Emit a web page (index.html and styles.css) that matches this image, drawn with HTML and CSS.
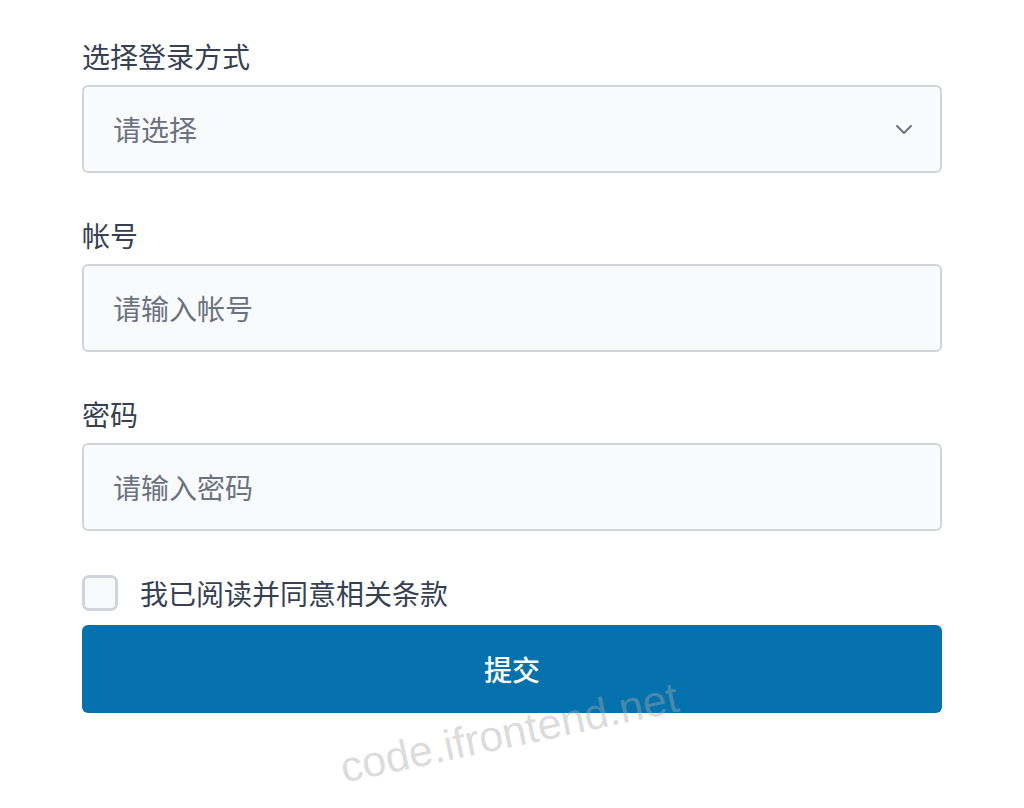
FILE: index.html
```html
<!doctype html>
<html lang="zh-CN">
<head>
    <meta charset="UTF-8">
    <meta name="viewport" content="width=device-width, initial-scale=1.0">
    <title>登录</title>
    <link rel="stylesheet" href="styles.css">
</head>
<body>

<form class="login-form">
    <div class="field">
        <label class="field-label">选择登录方式</label>
        <div class="select-box">
            <span class="placeholder">请选择</span>
            <svg class="chevron" width="24" height="24" viewBox="0 0 24 24">
                <path d="M5 9l7 7 7-7" fill="none" stroke="#6b7280" stroke-width="2" stroke-linecap="round" stroke-linejoin="round"/>
            </svg>
        </div>
    </div>

    <div class="field">
        <label class="field-label">帐号</label>
        <div class="input-box"><span class="placeholder">请输入帐号</span></div>
    </div>

    <div class="field">
        <label class="field-label">密码</label>
        <div class="input-box"><span class="placeholder">请输入密码</span></div>
    </div>

    <div class="agree-row">
        <span class="checkbox"></span>
        <span class="agree-text">我已阅读并同意相关条款</span>
    </div>

    <div class="submit-btn">提交</div>
</form>

<div class="watermark">code.ifrontend.net</div>

</body>
</html>
```

FILE: styles.css
```css
body {
    margin: 0;
    background: #fff;
    font-family: "Noto Sans CJK SC", "Noto Sans", sans-serif;
    color: #374151;
}

.login-form {
    width: 860px;
    padding: 36px 0 0 82px;
}

.field {
    margin-bottom: 42px;
}

.field-label {
    display: block;
    font-size: 28px;
    line-height: 40px;
    margin-bottom: 9px;
    color: #374151;
}

.select-box,
.input-box {
    box-sizing: border-box;
    height: 88px;
    border: 2px solid #d1d5db;
    border-radius: 6px;
    background: #f9fafb;
    display: flex;
    align-items: center;
    justify-content: space-between;
    padding: 0 24px 0 29px;
}

.placeholder {
    font-size: 28px;
    color: #6b7280;
}

.chevron {
    display: block;
}

.agree-row {
    display: flex;
    align-items: center;
    gap: 22px;
    height: 40px;
}

.checkbox {
    box-sizing: border-box;
    width: 36px;
    height: 36px;
    border: 3px solid #d1d5db;
    border-radius: 7px;
    background: #f9fafb;
}

.agree-text {
    font-size: 28px;
    color: #374151;
}

.submit-btn {
    margin-top: 12px;
    height: 88px;
    border-radius: 6px;
    background: #0672ad;
    color: #fff;
    font-size: 28px;
    font-weight: 500;
    display: flex;
    align-items: center;
    justify-content: center;
}

.watermark {
    position: absolute;
    left: 341px;
    top: 744px;
    font-family: "Liberation Sans", Arial, sans-serif;
    font-size: 43px;
    color: rgba(170, 170, 170, 0.42);
    transform: rotate(-12deg);
    transform-origin: left center;
    white-space: nowrap;
}
```
